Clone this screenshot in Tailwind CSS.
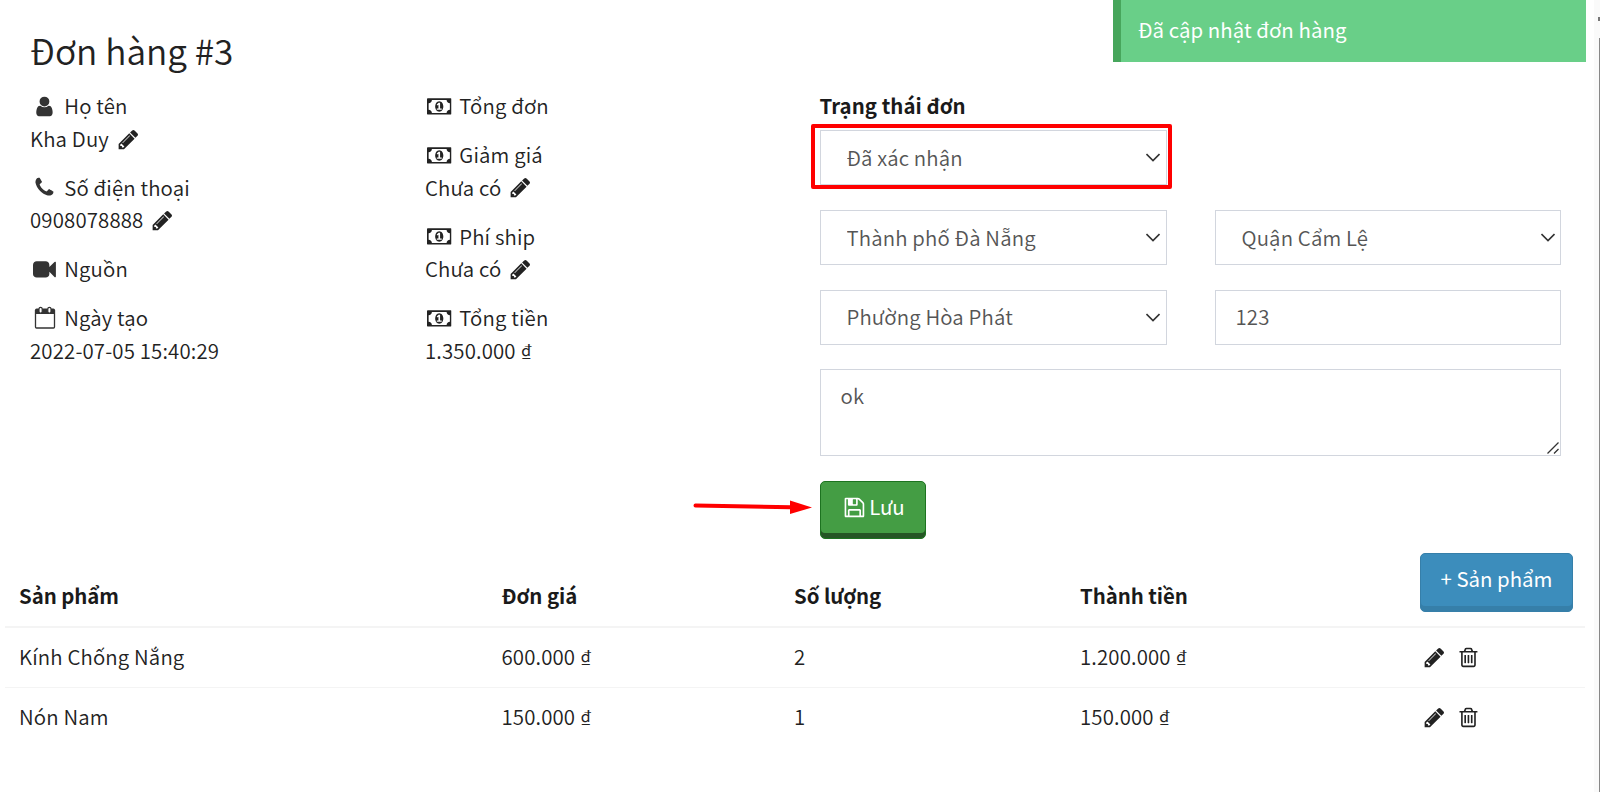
<!DOCTYPE html>
<html lang="vi">
<head>
  <meta charset="UTF-8" />
  <title>Đơn hàng #3</title>
  <script src="https://cdn.jsdelivr.net/npm/@tailwindcss/browser@4"></script>
  <style>
    body { font-family: 'Source Sans Pro', 'Noto Sans CJK SC', 'Noto Sans', sans-serif; font-weight: 350; }
  </style>
</head>
<body class="relative w-[1600px] h-[792px] overflow-hidden bg-white text-[20.4px] leading-[32.65px] tracking-[.15px] text-[#222]">

  <!-- Icon sprite -->
  <svg class="hidden">
    <symbol id="user" viewBox="0 0 1792 1792"><path d="M1536 1399q0 109-62.5 187t-150.5 78h-854q-88 0-150.5-78t-62.5-187q0-85 8.5-160.5t31.5-152 58.5-131 94-89 134.5-34.5q131 128 313 128t313-128q76 0 134.5 34.5t94 89 58.5 131 31.5 152 8.5 160.5zm-256-887q0 159-112.5 271.5t-271.5 112.5-271.5-112.5-112.5-271.5 112.5-271.5 271.5-112.5 271.5 112.5 112.5 271.5z"/></symbol>
    <symbol id="pencil" viewBox="0 0 1792 1792"><path d="M491 1536l91-91-235-235-91 91v107h128v128h107zm523-928q0-22-22-22-10 0-17 7l-542 542q-7 7-7 17 0 22 22 22 10 0 17-7l542-542q7-7 7-17zm-54-192l416 416-832 832h-416v-416zm683 96q0 53-37 90l-166 166-416-416 166-165q36-38 90-38 53 0 91 38l235 234q37 39 37 91z"/></symbol>
    <symbol id="phone" viewBox="0 0 1792 1792"><path d="M1600 1240q0 27-10 70.5t-21 68.5q-21 50-122 106-94 51-186 51-27 0-52.5-3.5t-57.5-12.5-47.5-14.5-55.5-20.5-49-18q-98-35-175-83-128-79-264.5-215.5t-215.5-264.5q-48-77-83-175-3-9-18-49t-20.5-55.5-14.5-47.5-12.5-57.5-3.5-52.5q0-92 51-186 56-101 106-122 25-11 68.5-21t70.5-10q14 0 21 3 18 6 53 76 11 19 30 54t35 63.5 31 53.5q3 4 17.5 25t21.5 35.5 7 28.5q0 20-28.5 50t-62 55-62 53-28.5 46q0 9 5 22.5t8.5 20.5 14 24 11.5 19q76 137 174 235t235 174q2 1 19 11.5t24 14 20.5 8.5 22.5 5q18 0 46-28.5t53-62 55-62 50-28.5q14 0 28.5 7t35.5 21.5 25 17.5q25 15 53.5 31t63.5 35 54 30q70 35 76 53 3 7 3 21z"/></symbol>
    <symbol id="video" viewBox="0 0 1792 1792"><path d="M1792 352v1088q0 42-39 59-13 5-25 5-27 0-45-19l-403-403v166q0 119-84.5 203.5t-203.5 84.5h-704q-119 0-203.5-84.5t-84.5-203.5v-704q0-119 84.5-203.5t203.5-84.5h704q119 0 203.5 84.5t84.5 203.5v165l403-402q18-19 45-19 12 0 25 5 39 17 39 59z"/></symbol>
    <symbol id="calendar" viewBox="0 0 22 24"><path d="M1.5 4v17q0 1 1 1h17q1 0 1-1V4" fill="none" stroke="currentColor" stroke-width="1.3"/><path d="M1 8V4q0-1.600 1.600-1.600H19.400Q21 2.400 21 4V8z"/><path d="M5 3a1.600 1.600 0 0 1 3.200 0v2.600a1.600 1.600 0 0 1-3.200 0zM13.800 3a1.600 1.600 0 0 1 3.200 0v2.600a1.600 1.600 0 0 1-3.200 0z" fill="#fff" stroke="currentColor" stroke-width="1.200"/></symbol>
    <symbol id="money" viewBox="0 0 1920 1792"><path d="M768 1152h384v-96h-128v-448h-114l-148 137 77 80q42-37 55-57h2v288h-128v96zm512-256q0 70-21 142t-59.5 134-101.5 101-138 39-138-39-101.5-101-59.5-134-21-142 21-142 59.5-134 101.5-101 138-39 138 39 101.5 101 59.5 134 21 142zm512 256v-512q-106 0-181-75t-75-181h-1152q0 106-75 181t-181 75v512q106 0 181 75t75 181h1152q0-106 75-181t181-75zm128-832v1152q0 26-19 45t-45 19h-1792q-26 0-45-19t-19-45v-1152q0-26 19-45t45-19h1792q26 0 45 19t19 45z"/></symbol>
    <symbol id="save" viewBox="0 0 1792 1792"><path d="M512 1536h768v-384h-768v384zm896 0h128v-896q0-14-10-38.500t-20-34.500l-281-281q-10-10-34-20t-39-10v416q0 40-28 68t-68 28h-576q-40 0-68-28t-28-68v-416h-128v1280h128v-416q0-40 28-68t68-28h832q40 0 68 28t28 68v416zm-384-928v-320q0-13-9.500-22.500t-22.500-9.500h-192q-13 0-22.500 9.500t-9.500 22.500v320q0 13 9.500 22.500t22.500 9.500h192q13 0 22.500-9.500t9.500-22.500zm640 32v928q0 40-28 68t-68 28h-1344q-40 0-68-28t-28-68v-1344q0-40 28-68t68-28h928q40 0 88 20t76 48l280 280q28 28 48 76t20 88z"/></symbol>
    <symbol id="trash" viewBox="0 0 1792 1792"><path d="M704 736v576q0 14-9 23t-23 9h-64q-14 0-23-9t-9-23v-576q0-14 9-23t23-9h64q14 0 23 9t9 23zm256 0v576q0 14-9 23t-23 9h-64q-14 0-23-9t-9-23v-576q0-14 9-23t23-9h64q14 0 23 9t9 23zm256 0v576q0 14-9 23t-23 9h-64q-14 0-23-9t-9-23v-576q0-14 9-23t23-9h64q14 0 23 9t9 23zm128 724v-948h-896v948q0 22 7 40.500t14.500 27 10.500 8.500h832q3 0 10.500-8.500t14.500-27 7-40.500zm-672-1076h448l-48-117q-7-9-17-11h-317q-10 2-17 11zm928 32v64q0 14-9 23t-23 9h-96v948q0 83-47 143.500t-113 60.500h-832q-66 0-113-58.500t-47-141.500v-952h-96q-14 0-23-9t-9-23v-64q0-14 9-23t23-9h309l70-167q15-37 54-63t79-26h320q40 0 79 26t54 63l70 167h309q14 0 23 9t9 23z"/></symbol>
    <symbol id="chevron" viewBox="0 0 14 9"><path d="M.5 1l6.500 6.500 6.500-6.500" fill="none" stroke="#333" stroke-width="1.600"/></symbol>
  </svg>

  <!-- Order info -->
  <div class="grid grid-cols-[395px_394.500px_741px] pl-[30px] pt-[26px]">
    <h1 class="col-span-3 text-[35.200px] leading-[48px] tracking-normal mb-[15px]">Đơn hàng #3</h1>

    <div class="space-y-[16.300px]">
      <div>
        <div class="flex items-center gap-[5px]"><svg class="size-[22.900px] mt-[2px] mx-[3.200px] fill-[#333]"><use href="#user"/></svg>Họ tên</div>
        <div class="flex items-center gap-[8px]">Kha Duy <svg class="size-[22.900px] mt-[2px] fill-[#222]"><use href="#pencil"/></svg></div>
      </div>
      <div>
        <div class="flex items-center gap-[5px]"><svg class="size-[22.900px] mt-[2px] mx-[3.200px] fill-[#333]"><use href="#phone"/></svg>Số điện thoại</div>
        <div class="flex items-center gap-[8px]">0908078888 <svg class="size-[22.900px] mt-[2px] fill-[#222]"><use href="#pencil"/></svg></div>
      </div>
      <div class="flex items-center gap-[5px]"><svg class="size-[22.900px] mt-[2px] mx-[3.200px] fill-[#333]"><use href="#video"/></svg>Nguồn</div>
      <div>
        <div class="flex items-center gap-[5px]"><svg class="w-[22px] h-[24px] mx-[3.600px] text-[#333] fill-[#333]"><use href="#calendar"/></svg>Ngày tạo</div>
        <div>2022-07-05 15:40:29</div>
      </div>
    </div>

    <div class="space-y-[16.300px]">
      <div class="flex items-center gap-[5px]"><svg class="w-[24.500px] h-[22.900px] mt-[2px] mx-[2.400px] fill-[#222]"><use href="#money"/></svg>Tổng đơn</div>
      <div>
        <div class="flex items-center gap-[5px]"><svg class="w-[24.500px] h-[22.900px] mt-[2px] mx-[2.400px] fill-[#222]"><use href="#money"/></svg>Giảm giá</div>
        <div class="flex items-center gap-[8px]">Chưa có <svg class="size-[22.900px] mt-[2px] fill-[#222]"><use href="#pencil"/></svg></div>
      </div>
      <div>
        <div class="flex items-center gap-[5px]"><svg class="w-[24.500px] h-[22.900px] mt-[2px] mx-[2.400px] fill-[#222]"><use href="#money"/></svg>Phí ship</div>
        <div class="flex items-center gap-[8px]">Chưa có <svg class="size-[22.900px] mt-[2px] fill-[#222]"><use href="#pencil"/></svg></div>
      </div>
      <div>
        <div class="flex items-center gap-[5px]"><svg class="w-[24.500px] h-[22.900px] mt-[2px] mx-[2.400px] fill-[#222]"><use href="#money"/></svg>Tổng tiền</div>
        <div>1.350.000 ₫</div>
      </div>
    </div>

    <!-- Status and address form -->
    <form class="text-[#555]">
      <label class="block font-bold tracking-[.05px] text-[#1a1a1a] mb-[8.500px]">Trạng thái đơn</label>
      <div class="grid grid-cols-[346px_346px] gap-x-[49px] gap-y-[24.700px]">
        <div class="relative h-[55px] col-span-2 w-[347px]">
          <select class="appearance-none w-full h-full border border-[#d2d6de] pl-[26px] pb-[1px]"><option>Đã xác nhận</option></select>
          <svg class="absolute right-[7px] top-[23px] w-[14px] h-[9px]"><use href="#chevron"/></svg>
          <div class="absolute -left-[9px] -top-[6px] w-[361px] h-[65px] border-4 border-[#f00] rounded-[2px]"></div>
        </div>
        <div class="relative h-[55px] w-[347px]">
          <select class="appearance-none w-full h-full border border-[#d2d6de] pl-[26px] pb-[1px]"><option>Thành phố Đà Nẵng</option></select>
          <svg class="absolute right-[7px] top-[23px] w-[14px] h-[9px]"><use href="#chevron"/></svg>
        </div>
        <div class="relative h-[55px]">
          <select class="appearance-none w-full h-full border border-[#d2d6de] pl-[26px] pb-[1px]"><option>Quận Cẩm Lệ</option></select>
          <svg class="absolute right-[6px] top-[23px] w-[14px] h-[9px]"><use href="#chevron"/></svg>
        </div>
        <div class="relative h-[55px] w-[347px]">
          <select class="appearance-none w-full h-full border border-[#d2d6de] pl-[26px] pb-[1px]"><option>Phường Hòa Phát</option></select>
          <svg class="absolute right-[7px] top-[23px] w-[14px] h-[9px]"><use href="#chevron"/></svg>
        </div>
        <input type="text" value="123" class="h-[55px] border border-[#d2d6de] px-[20px] pb-[2px]" />
        <div class="relative col-span-2 h-[87px]">
          <textarea class="block resize-none w-full h-full border border-[#d2d6de] px-[20px] py-[9px]">ok</textarea>
          <svg class="absolute right-[2px] bottom-[2px] w-[12px] h-[12px] stroke-[#333]" viewBox="0 0 12 12" fill="none" stroke-width="1.3"><path d="M.5 11.500L11.500.5M7 11.500L11.500 7"/></svg>
        </div>
      </div>
      <div class="relative mt-[24.500px]">
        <button type="button" class="flex items-center justify-center gap-[3px] w-[106px] h-[58.500px] pl-[3px] pb-[7px] rounded-[5px] border border-[#1d7320] bg-[#449d44] shadow-[inset_0_-5px_0_#255625] font-normal tracking-normal text-white"><svg class="size-[22.900px] mt-[2px] fill-white"><use href="#save"/></svg>Lưu</button>
        <!-- Arrow pointing at the save button -->
        <svg class="absolute -left-[127px] top-[17px] w-[120px] h-[18px]" viewBox="0 0 120 18"><path d="M2.500 7.500L98 9.300" stroke="#f00" stroke-width="4" stroke-linecap="round"/><path d="M97 2.500L119 9.500L97 16z" fill="#f00"/></svg>
      </div>
    </form>
  </div>

  <!-- Products -->
  <table class="table-fixed w-[1580px] ml-[5px] text-left">
    <colgroup><col class="w-[482.500px]" /><col class="w-[292.500px]" /><col class="w-[286px]" /><col class="w-[344px]" /><col class="w-[175px]" /></colgroup>
    <thead>
      <tr class="h-[88px] border-b-2 border-[#f4f4f4] font-bold tracking-[-.05px] text-[#1a1a1a]">
        <th class="pl-[14px] pt-[25px]">Sản phẩm</th>
        <th class="pl-[14px] pt-[25px]">Đơn giá</th>
        <th class="pl-[14px] pt-[25px]">Số lượng</th>
        <th class="pl-[14px] pt-[25px]">Thành tiền</th>
        <th class="pl-[10px]"><button type="button" class="w-[153px] h-[59px] mt-[-1px] pb-[8px] rounded-[5px] border border-[#367fa9] bg-[#3c8dbc] shadow-[inset_0_-5px_0_#367fa9] font-normal tracking-normal text-white">+ Sản phẩm</button></th>
      </tr>
    </thead>
    <tbody>
      <tr class="h-[60px] border-b border-[#f4f4f4]">
        <td class="pl-[14px] pb-[2px]">Kính Chống Nắng</td>
        <td class="pl-[14px] pb-[2px]">600.000 ₫</td>
        <td class="pl-[14px] pb-[2px]">2</td>
        <td class="pl-[14px] pb-[2px]">1.200.000 ₫</td>
        <td class="pl-[13px]"><div class="flex gap-[11px]"><svg class="size-[22.900px] fill-[#222]"><use href="#pencil"/></svg><svg class="size-[22.900px] fill-[#222]"><use href="#trash"/></svg></div></td>
      </tr>
      <tr class="h-[60px]">
        <td class="pl-[14px] pb-[2px]">Nón Nam</td>
        <td class="pl-[14px] pb-[2px]">150.000 ₫</td>
        <td class="pl-[14px] pb-[2px]">1</td>
        <td class="pl-[14px] pb-[2px]">150.000 ₫</td>
        <td class="pl-[13px]"><div class="flex gap-[11px]"><svg class="size-[22.900px] fill-[#222]"><use href="#pencil"/></svg><svg class="size-[22.900px] fill-[#222]"><use href="#trash"/></svg></div></td>
      </tr>
    </tbody>
  </table>

  <!-- Toast -->
  <div class="absolute left-[1113px] top-0 w-[473px] h-[62px] flex items-center border-l-8 border-[#47a65c] bg-[#69cf88] pl-[17px] pb-[3px] font-normal tracking-[.05px] text-white">Đã cập nhật đơn hàng</div>

  <!-- Scrollbar -->
  <div class="absolute right-0 top-0 w-[6px] h-full bg-[#fafafa]">
    <div class="absolute right-0 top-[17px] w-[2px] h-[4px] bg-[#777]"></div>
    <div class="absolute right-0 top-[38px] bottom-0 w-px bg-[#888]"></div>
  </div>
</body>
</html>
